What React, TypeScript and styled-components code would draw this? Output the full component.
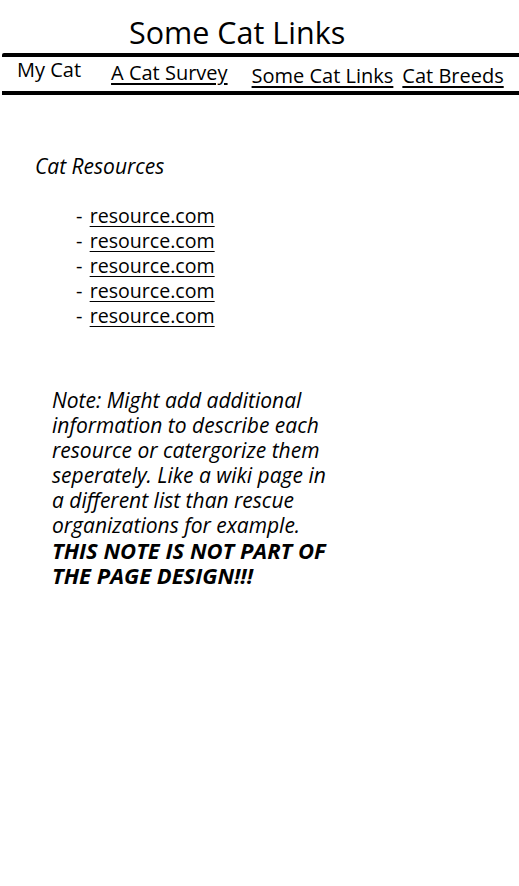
import React from "react";
import styled, { createGlobalStyle } from "styled-components";

const GlobalStyle = createGlobalStyle`
  body {
    margin: 0;
    background: #fff;
    color: #000;
    font-family: "Open Sans", "Noto Sans", sans-serif;
  }
`;

type NavItem = {
  label: string;
  link: boolean;
  gap: number;
  top: number;
};

// spacing in the original mockup is hand-placed, so each entry keeps its own offsets
const navItems: NavItem[] = [
  { label: "My Cat", link: false, gap: 15, top: 0 },
  { label: "A Cat Survey", link: true, gap: 30, top: 3 },
  { label: "Some Cat Links", link: true, gap: 24, top: 6 },
  { label: "Cat Breeds", link: true, gap: 9, top: 6 },
];

const Page = styled.div`
  width: 519px;
  min-height: 886px;
`;

const Title = styled.h1`
  margin: 0;
  padding: 12px 0 0 129px;
  height: 41px;
  font-size: 30.5px;
  font-weight: 400;
  line-height: 40px;
`;

const Nav = styled.nav`
  display: flex;
  align-items: flex-start;
  height: 34px;
  margin-left: 2px;
  border-top: 4px solid #000;
  border-bottom: 4px solid #000;
  border-top-left-radius: 2px;
`;

const NavEntry = styled.a<{ $gap: number; $top: number; $link: boolean }>`
  margin-left: ${({ $gap }) => $gap}px;
  margin-top: ${({ $top }) => $top}px;
  font-size: 20px;
  line-height: 26px;
  color: #000;
  white-space: nowrap;
  text-decoration: ${({ $link }) => ($link ? "underline" : "none")};
  text-underline-offset: 3px;
  cursor: pointer;
`;

const Main = styled.main`
  padding: 58px 0 0 35px;
`;

const SectionTitle = styled.h2`
  margin: 0;
  font-size: 21px;
  font-style: italic;
  font-weight: 400;
  line-height: 26px;
`;

const List = styled.ul`
  list-style: none;
  margin: 24px 0 0;
  padding: 0 0 0 41px;
`;

const ListItem = styled.li`
  font-size: 20px;
  line-height: 25px;

  a {
    margin-left: 2px;
    color: #000;
    font-size: 19.6px;
    text-decoration: underline;
    text-underline-offset: 3px;
  }
`;

const Note = styled.p`
  width: 285px;
  margin: 60px 0 0 17px;
  font-size: 21px;
  font-style: italic;
  line-height: 25px;

  strong {
    display: block;
    font-size: 22px;
    font-weight: 700;
  }
`;

export default function App() {
  return (
    <Page>
      <GlobalStyle />
      <Title>Some Cat Links</Title>
      <Nav>
        {navItems.map(({ label, link, gap, top }) => (
          <NavEntry
            key={label}
            href={link ? "#" : undefined}
            $gap={gap}
            $top={top}
            $link={link}
          >
            {label}
          </NavEntry>
        ))}
      </Nav>
      <Main>
        <SectionTitle>Cat Resources</SectionTitle>
        <List>
          {[0, 1, 2, 3, 4].map((i) => (
            <ListItem key={i}>
              {"- "}
              <a href="#">resource.com</a>
            </ListItem>
          ))}
        </List>
        <Note>
          Note: Might add additional information to describe each resource or
          catergorize them seperately. Like a wiki page in a different list
          than rescue organizations for example.
          <strong>THIS NOTE IS NOT PART OF THE PAGE DESIGN!!!</strong>
        </Note>
      </Main>
    </Page>
  );
}
